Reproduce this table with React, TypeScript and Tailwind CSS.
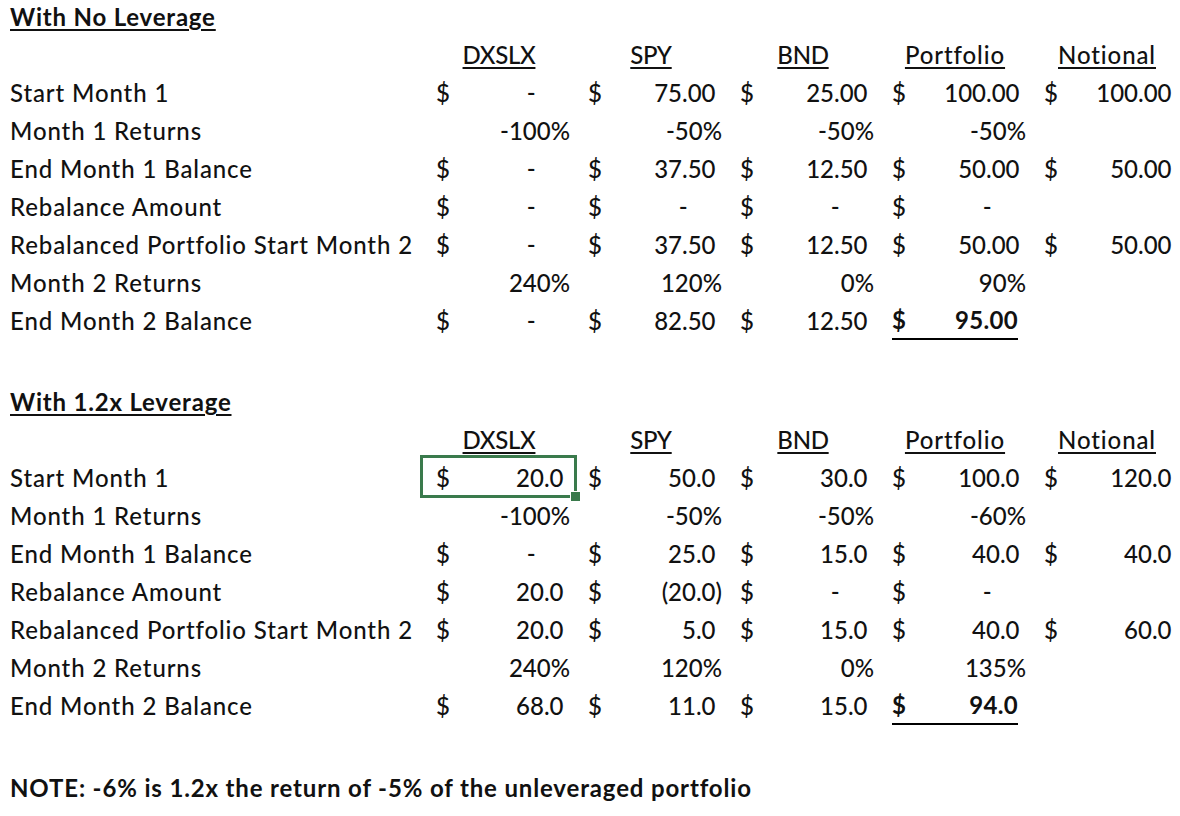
import React from 'react';

type Row = { label: string; cells: string[] };

const HEADERS = ['DXSLX', 'SPY', 'BND', 'Portfolio', 'Notional'];

const SEC1: Row[] = [
  { label: 'Start Month 1', cells: ['$-', '$75.00', '$25.00', '$100.00', '$100.00'] },
  { label: 'Month 1 Returns', cells: ['-100%', '-50%', '-50%', '-50%', ''] },
  { label: 'End Month 1 Balance', cells: ['$-', '$37.50', '$12.50', '$50.00', '$50.00'] },
  { label: 'Rebalance Amount', cells: ['$-', '$-', '$-', '$-', ''] },
  { label: 'Rebalanced Portfolio Start Month 2', cells: ['$-', '$37.50', '$12.50', '$50.00', '$50.00'] },
  { label: 'Month 2 Returns', cells: ['240%', '120%', '0%', '90%', ''] },
  { label: 'End Month 2 Balance', cells: ['$-', '$82.50', '$12.50', '*95.00', ''] },
];

const SEC2: Row[] = [
  { label: 'Start Month 1', cells: ['#20.0', '$50.0', '$30.0', '$100.0', '$120.0'] },
  { label: 'Month 1 Returns', cells: ['-100%', '-50%', '-50%', '-60%', ''] },
  { label: 'End Month 1 Balance', cells: ['$-', '$25.0', '$15.0', '$40.0', '$40.0'] },
  { label: 'Rebalance Amount', cells: ['$20.0', '$(20.0)', '$-', '$-', ''] },
  { label: 'Rebalanced Portfolio Start Month 2', cells: ['$20.0', '$5.0', '$15.0', '$40.0', '$60.0'] },
  { label: 'Month 2 Returns', cells: ['240%', '120%', '0%', '135%', ''] },
  { label: 'End Month 2 Balance', cells: ['$68.0', '$11.0', '$15.0', '*94.0', ''] },
];

function MoneyValue({ v }: { v: string }) {
  if (v === '-') {
    return (
      <span>
        -<span className="invisible">00)</span>
      </span>
    );
  }
  if (v.startsWith('(')) return <span>{v}</span>;
  return (
    <span>
      {v}
      <span className="invisible">)</span>
    </span>
  );
}

function Cell({ c }: { c: string }) {
  if (c === '') return <div className="h-[38px]" />;
  if (c.startsWith('*')) {
    return (
      <div className="flex h-[38px] px-[13px]">
        <div className="flex flex-1 items-center justify-between border-b-2 border-black font-bold tracking-[0.3px]">
          <span>$</span>
          <span>{c.slice(1)}</span>
        </div>
      </div>
    );
  }
  if (c.startsWith('#')) {
    return (
      <div className="relative flex h-[38px] items-center justify-between px-[5px]">
        <span className="pl-[8px]">$</span>
        <MoneyValue v={c.slice(1)} />
        <div className="pointer-events-none absolute -left-[3px] -right-[2px] -top-[4px] -bottom-[1px] border-[3px] border-[#3a7a4c]" />
        <div className="pointer-events-none absolute -right-[6px] -bottom-[5px] h-[11px] w-[11px] border border-white bg-[#3a7a4c]" />
      </div>
    );
  }
  if (c.startsWith('$')) {
    return (
      <div className="flex h-[38px] items-center justify-between px-[5px]">
        <span className="pl-[8px]">$</span>
        <MoneyValue v={c.slice(1)} />
      </div>
    );
  }
  return <div className="flex h-[38px] items-center justify-end px-[5px]">{c}</div>;
}

function Section({ title, rows }: { title: string; rows: Row[] }) {
  return (
    <div className="grid grid-cols-[423px_152px_152px_152px_152px_152px]">
      <div className="col-span-6 flex h-[38px] items-center pl-[10px] font-bold tracking-[0.8px] underline decoration-2 underline-offset-[3px]">
        {title}
      </div>
      <div className="h-[38px]" />
      {HEADERS.map((h) => (
        <div
          key={h}
          className={`flex h-[38px] items-center justify-center underline decoration-[1.5px] underline-offset-[3px] ${
            h === 'Portfolio' || h === 'Notional' ? 'tracking-[0.9px]' : 'tracking-[-0.3px]'
          }`}
        >
          {h}
        </div>
      ))}
      {rows.map((r, i) => (
        <React.Fragment key={i}>
          <div className="flex h-[38px] items-center whitespace-nowrap pl-[10px] tracking-[0.88px]">{r.label}</div>
          {r.cells.map((c, j) => (
            <Cell key={j} c={c} />
          ))}
        </React.Fragment>
      ))}
    </div>
  );
}

export default function App() {
  return (
    <div className="h-[816px] w-[1180px] overflow-hidden bg-white font-['Lato',sans-serif] text-[24px] font-medium leading-[38px] text-[#111]">
      <div className="-mt-[2px]">
        <Section title="With No Leverage" rows={SEC1} />
        <div className="h-[43px]" />
        <Section title="With 1.2x Leverage" rows={SEC2} />
        <div className="h-[44px]" />
        <div className="flex h-[38px] items-center whitespace-nowrap pl-[10px] font-bold tracking-[0.85px]">
          NOTE: -6% is 1.2x the return of -5% of the unleveraged portfolio
        </div>
      </div>
    </div>
  );
}
